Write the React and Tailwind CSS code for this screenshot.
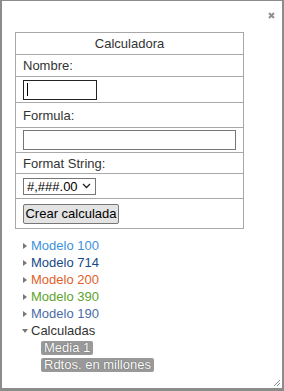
import React from "react";

const Tri = ({ open }) =>
  open ? (
    <svg width="6" height="4" viewBox="0 0 6 4" className="mr-[3px] -ml-[1px]">
      <path d="M0 0 L6 0 L3 4 Z" fill="#777" />
    </svg>
  ) : (
    <svg width="4" height="6" viewBox="0 0 4 6" className="mr-[4px]">
      <path d="M0 0 L4 3 L0 6 Z" fill="#777" />
    </svg>
  );

const models = [
  ["Modelo 100", "text-[#3c91dc]"],
  ["Modelo 714", "text-[#164a86]"],
  ["Modelo 200", "text-[#e0602a]"],
  ["Modelo 390", "text-[#5ca42c]"],
  ["Modelo 190", "text-[#4a6ca6]"],
];

export default function App() {
  return (
    <div
      className="w-[284px] h-[391px] bg-white border-x-2 border-t border-b-[3px] border-[#8c8c8c] relative text-[13px] text-[#333] leading-none"
      style={{ fontFamily: '"Liberation Sans", Arial, sans-serif' }}
    >
      <svg
        width="7"
        height="7"
        viewBox="0 0 7 7"
        className="absolute left-[266px] top-[11px]"
      >
        <path d="M1 1 L6 6 M6 1 L1 6" stroke="#8f8f8f" strokeWidth="2" />
      </svg>
      <svg
        width="6"
        height="6"
        viewBox="0 0 6 6"
        className="absolute left-[272px] top-[379px]"
      >
        <path d="M6 0 L0 6 M6 3 L3 6" stroke="#888" strokeWidth="1" />
      </svg>

      <div className="pl-[13px] pt-[31px]">
        <div className="w-[229px] border border-[#a8a8a8] border-b-0">
          <div className="h-[22px] border-b border-[#a8a8a8] flex items-center justify-center">
            Calculadora
          </div>
          <div className="h-[22px] border-b border-[#a8a8a8] flex items-center pl-[7px]">
            Nombre:
          </div>
          <div className="h-[26px] border-b border-[#a8a8a8] flex items-center pl-[7px]">
            <div className="w-[74px] h-[20px] border border-[#222] flex items-center pl-[3px]">
              <div className="w-px h-[13px] bg-black" />
            </div>
          </div>
          <div className="h-[25px] border-b border-[#a8a8a8] flex items-center pl-[7px]">
            Formula:
          </div>
          <div className="h-[25px] border-b border-[#a8a8a8] flex items-center pl-[7px]">
            <div className="w-[213px] h-[20px] border border-[#767676]" />
          </div>
          <div className="h-[21px] border-b border-[#a8a8a8] flex items-center pl-[7px]">
            Format String:
          </div>
          <div className="h-[25px] border-b border-[#a8a8a8] flex items-center pl-[7px]">
            <div className="w-[73px] h-[17px] border border-[#767676] flex items-center pl-[3px] text-black">
              <span>#,###.00</span>
              <svg width="9" height="6" viewBox="0 0 9 6" className="ml-[4px]">
                <path d="M1 1 L4.5 4.5 L8 1" stroke="#222" strokeWidth="1.3" fill="none" />
              </svg>
            </div>
          </div>
          <div className="h-[30px] border-b border-[#a8a8a8] flex items-center pl-[7px]">
            <div className="w-[96px] h-[20px] border border-[#767676] rounded-[2px] bg-[#e3e3e3] flex items-center justify-center text-black">
              Crear calculada
            </div>
          </div>
        </div>

        <div className="mt-[8px] pl-[8px] leading-[17px] text-[13px]">
          {models.map(([t, c]) => (
            <div key={t} className="flex items-center h-[17px]">
              <Tri />
              <span className={c}>{t}</span>
            </div>
          ))}
          <div className="flex items-center h-[17px]">
            <Tri open />
            <span className="text-[#333]">Calculadas</span>
          </div>
          <div className="pl-[18px] flex flex-col items-start">
            <div className="h-[17px] flex items-center">
              <span className="bg-[#999] text-white rounded-[2px] px-[3px] h-[14px] leading-[14px] [text-shadow:0_0_1px_#444]">
                Media 1
              </span>
            </div>
            <div className="h-[17px] flex items-center">
              <span className="bg-[#999] text-white rounded-[2px] px-[3px] h-[14px] leading-[14px] [text-shadow:0_0_1px_#444]">
                Rdtos. en millones
              </span>
            </div>
          </div>
        </div>
      </div>
    </div>
  );
}
